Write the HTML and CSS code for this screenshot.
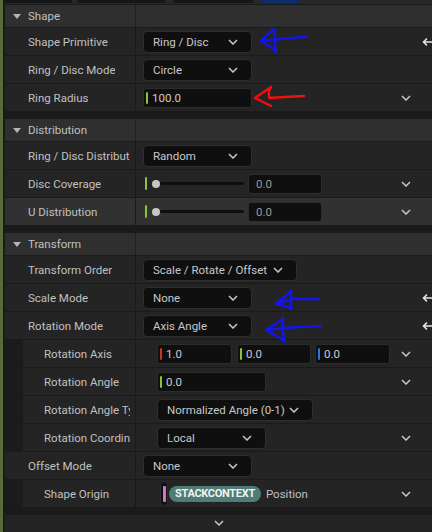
FILE: index.html
```html
<!DOCTYPE html>
<html>
<head>
<meta charset="utf-8">
<title>Details</title>
<link rel="stylesheet" href="styles.css">
</head>
<body>
<div class="app">
  <div class="topbar"><span class="tb tb1"></span><span class="tb tb2"></span><span class="tb tb3"></span><span class="tb tb4"></span></div>

  <section class="section first">
    <div class="header"><div class="hlabel"><span class="tri"></span>Shape</div><div class="hval"></div></div>
    <div class="row">
      <div class="label"><span class="lt">Shape Primitive</span></div>
      <div class="value">
        <div class="content"><div class="combo w109"><span>Ring / Disc</span><svg class="chev" width="10" height="6" viewBox="0 0 10 6"><polyline points="1,1 5,5 9,1"/></svg></div></div>
        <div class="exp"></div>
        <div class="reset"><svg width="14" height="10" viewBox="0 0 14 10"><path d="M5 1.5 L1.5 5 L5 8.5 M1.5 5 H11 V8"/></svg></div>
      </div>
    </div>
    <div class="row">
      <div class="label"><span class="lt">Ring / Disc Mode</span></div>
      <div class="value">
        <div class="content"><div class="combo w109"><span>Circle</span><svg class="chev" width="10" height="6" viewBox="0 0 10 6"><polyline points="1,1 5,5 9,1"/></svg></div></div>
        <div class="exp"></div><div class="reset"></div>
      </div>
    </div>
    <div class="row">
      <div class="label"><span class="lt">Ring Radius</span></div>
      <div class="value">
        <div class="content"><div class="num w109"><span class="bar green"></span><span>100.0</span></div></div>
        <div class="exp"><svg class="chev" width="10" height="6" viewBox="0 0 10 6"><polyline points="1,1 5,5 9,1"/></svg></div><div class="reset"></div>
      </div>
    </div>
  </section>

  <section class="section">
    <div class="header"><div class="hlabel"><span class="tri"></span>Distribution</div><div class="hval"></div></div>
    <div class="row">
      <div class="label"><span class="lt">Ring / Disc Distribution</span></div>
      <div class="value">
        <div class="content"><div class="combo w109"><span>Random</span><svg class="chev" width="10" height="6" viewBox="0 0 10 6"><polyline points="1,1 5,5 9,1"/></svg></div></div>
        <div class="exp"></div><div class="reset"></div>
      </div>
    </div>
    <div class="row">
      <div class="label"><span class="lt">Disc Coverage</span></div>
      <div class="value">
        <div class="content">
          <div class="slider"><span class="sbar"></span><span class="knob"></span><span class="track"></span></div>
          <div class="num w74 dim"><span>0.0</span></div>
        </div>
        <div class="exp"><svg class="chev" width="10" height="6" viewBox="0 0 10 6"><polyline points="1,1 5,5 9,1"/></svg></div><div class="reset"></div>
      </div>
    </div>
    <div class="row hover">
      <div class="label"><span class="lt">U Distribution</span></div>
      <div class="value">
        <div class="content">
          <div class="slider"><span class="sbar"></span><span class="knob"></span><span class="track"></span></div>
          <div class="num w74 dim"><span>0.0</span></div>
        </div>
        <div class="exp"><svg class="chev" width="10" height="6" viewBox="0 0 10 6"><polyline points="1,1 5,5 9,1"/></svg></div><div class="reset"></div>
      </div>
    </div>
  </section>

  <section class="section">
    <div class="header"><div class="hlabel"><span class="tri"></span>Transform</div><div class="hval"></div></div>
    <div class="row">
      <div class="label"><span class="lt">Transform Order</span></div>
      <div class="value">
        <div class="content"><div class="combo w154"><span>Scale / Rotate / Offset</span><svg class="chev" width="10" height="6" viewBox="0 0 10 6"><polyline points="1,1 5,5 9,1"/></svg></div></div>
        <div class="exp"></div><div class="reset"></div>
      </div>
    </div>
    <div class="row">
      <div class="label"><span class="lt">Scale Mode</span></div>
      <div class="value">
        <div class="content"><div class="combo w109"><span>None</span><svg class="chev" width="10" height="6" viewBox="0 0 10 6"><polyline points="1,1 5,5 9,1"/></svg></div></div>
        <div class="exp"></div>
        <div class="reset"><svg width="14" height="10" viewBox="0 0 14 10"><path d="M5 1.5 L1.5 5 L5 8.5 M1.5 5 H11 V8"/></svg></div>
      </div>
    </div>
    <div class="row">
      <div class="label"><span class="lt">Rotation Mode</span></div>
      <div class="value">
        <div class="content"><div class="combo w109"><span>Axis Angle</span><svg class="chev" width="10" height="6" viewBox="0 0 10 6"><polyline points="1,1 5,5 9,1"/></svg></div></div>
        <div class="exp"></div>
        <div class="reset"><svg width="14" height="10" viewBox="0 0 14 10"><path d="M5 1.5 L1.5 5 L5 8.5 M1.5 5 H11 V8"/></svg></div>
      </div>
    </div>
    <div class="row nested">
      <div class="label"><span class="lt">Rotation Axis</span></div>
      <div class="value">
        <div class="content axis">
          <div class="num w75"><span class="bar red"></span><span>1.0</span></div>
          <div class="num w74"><span class="bar green"></span><span>0.0</span></div>
          <div class="num w75"><span class="bar blue"></span><span>0.0</span></div>
        </div>
        <div class="exp"><svg class="chev" width="10" height="6" viewBox="0 0 10 6"><polyline points="1,1 5,5 9,1"/></svg></div><div class="reset"></div>
      </div>
    </div>
    <div class="row nested">
      <div class="label"><span class="lt">Rotation Angle</span></div>
      <div class="value">
        <div class="content"><div class="num w109"><span class="bar green"></span><span>0.0</span></div></div>
        <div class="exp"><svg class="chev" width="10" height="6" viewBox="0 0 10 6"><polyline points="1,1 5,5 9,1"/></svg></div><div class="reset"></div>
      </div>
    </div>
    <div class="row nested">
      <div class="label"><span class="lt">Rotation Angle Type</span></div>
      <div class="value">
        <div class="content"><div class="combo w156"><span>Normalized Angle (0-1)</span><svg class="chev" width="10" height="6" viewBox="0 0 10 6"><polyline points="1,1 5,5 9,1"/></svg></div></div>
        <div class="exp"></div><div class="reset"></div>
      </div>
    </div>
    <div class="row nested">
      <div class="label"><span class="lt">Rotation Coordinate Space</span></div>
      <div class="value">
        <div class="content"><div class="combo w109"><span>Local</span><svg class="chev" width="10" height="6" viewBox="0 0 10 6"><polyline points="1,1 5,5 9,1"/></svg></div></div>
        <div class="exp"><svg class="chev" width="10" height="6" viewBox="0 0 10 6"><polyline points="1,1 5,5 9,1"/></svg></div><div class="reset"></div>
      </div>
    </div>
    <div class="row">
      <div class="label"><span class="lt">Offset Mode</span></div>
      <div class="value">
        <div class="content"><div class="combo w109"><span>None</span><svg class="chev" width="10" height="6" viewBox="0 0 10 6"><polyline points="1,1 5,5 9,1"/></svg></div></div>
        <div class="exp"></div><div class="reset"></div>
      </div>
    </div>
    <div class="row nested">
      <div class="label"><span class="lt">Shape Origin</span></div>
      <div class="value">
        <div class="content">
          <div class="pin"><span class="pbar"></span></div>
          <span class="pill">STACKCONTEXT</span>
          <span class="ptext">Position</span>
        </div>
        <div class="exp"><svg class="chev" width="10" height="6" viewBox="0 0 10 6"><polyline points="1,1 5,5 9,1"/></svg></div><div class="reset"></div>
      </div>
    </div>
  </section>

  <div class="footer"><svg class="chev" width="10" height="6" viewBox="0 0 10 6"><polyline points="1,1 5,5 9,1"/></svg></div>
</div>

<svg class="annot" width="432" height="532" viewBox="0 0 432 532">
  <g class="ablue">
    <path d="M306 37 Q285 38 261 41 M274 29 L261 41 L277 51 M274 29 Q276 40 275 52"/>
    <path d="M319 299 L291 299 L276 304 M291 291 L276 304 L292 308 M291 290 L291 309"/>
    <path d="M321 326 Q300 327 283 328 L266 330 M283 319 L266 330 L285 341 M283 318 Q282 330 284 342"/>
  </g>
  <g class="ared">
    <path d="M304 96 L284 97 L269 98 M271 87 L255 98 L271 106 M271 87 Q267 93 270 98"/>
  </g>
</svg>
</body>
</html>
```

FILE: styles.css
```css
* { box-sizing: border-box; }
html, body { margin: 0; padding: 0; }
body {
  width: 432px;
  height: 532px;
  overflow: hidden;
  background: #1a1a1a;
  font-family: Roboto, "Liberation Sans", sans-serif;
  font-size: 11.5px;
  color: #c0c0c0;
  position: relative;
}
.app {
  min-height: 532px;
  border-left: 3px solid #5a6a3b;
  padding-left: 2px;
  background: #1a1a1a;
}
.topbar {
  height: 4px;
  background: #272727;
  display: flex;
}
.tb { height: 3px; background: #161616; }
.tb1 { width: 67px; }
.tb2 { width: 87px; margin-left: 6px; }
.tb3 { width: 80px; margin-left: 8px; }
.tb4 { width: 38px; margin-left: 9px; background: #0c2c6a; }

.section { margin-top: 8px; }
.section.first { margin-top: 1px; }

.header {
  height: 22px;
  display: grid;
  grid-template-columns: 131px 1fr;
  background: #2f2f2f;
}
.hlabel {
  display: flex;
  align-items: center;
  padding-left: 8px;
  border-right: 1px solid #1f1f1f;
  color: #c0c0c0;
}
.tri {
  width: 0; height: 0;
  border-left: 4px solid transparent;
  border-right: 4px solid transparent;
  border-top: 5px solid #b4b4b4;
  margin-right: 7px;
}

.row {
  height: 28px;
  border-top: 1px solid #1a1a1a;
  display: grid;
  grid-template-columns: 131px 1fr;
  background: #242424;
}
.row.hover { background: #313131; }
.label {
  display: flex;
  align-items: center;
  padding-left: 23px;
  padding-right: 5px;
  border-right: 1px solid #1a1a1a;
  white-space: nowrap;
  overflow: hidden;
  min-width: 0;
}
.lt {
  display: block;
  overflow: hidden;
  white-space: nowrap;
  max-width: 100%;
}
.nested .label {
  padding-left: 39px;
  background: linear-gradient(90deg, #1b1b1b 0, #1b1b1b 18px, transparent 18px);
}
.value {
  display: flex;
  align-items: center;
  padding-left: 7px;
}
.nested .value { padding-left: 21px; }
.content {
  flex: 1;
  display: flex;
  align-items: center;
  min-width: 0;
}
.exp {
  width: 20px;
  display: flex;
  justify-content: center;
  align-items: center;
}
.reset {
  width: 16px;
  padding-left: 6px;
  display: flex;
  align-items: center;
  overflow: hidden;
}
.reset svg { flex: none; }
.reset path { fill: none; stroke: #e6e6e6; stroke-width: 1.6; }

.chev { flex: none; }
.chev polyline { fill: none; stroke: #c8c8c8; stroke-width: 1.5; }

.combo {
  height: 22px;
  background: #0f0f0f;
  border: 1px solid #2e2e2e;
  border-radius: 4px;
  display: flex;
  align-items: center;
  justify-content: space-between;
  padding: 0 13px 0 9px;
  white-space: nowrap;
  color: #c8c8c8;
}
.w109 { width: 109px; }
.w154 { width: 154px; padding-right: 13px; }
.w156 { width: 156px; padding-right: 13px; }
.w74 { width: 74px; }
.w75 { width: 75px; }

.num {
  height: 20px;
  background: #0f0f0f;
  border: 1px solid #2c2c2c;
  border-radius: 3px;
  display: flex;
  align-items: center;
  padding-left: 2px;
  color: #cccccc;
}
.num .bar { margin-right: 4px; }
.num.dim { padding-left: 7px; color: #9a9a9a; }
.bar { width: 2px; height: 12px; border-radius: 1px; }
.green { background: #86c43a; }
.red { background: #c9361f; }
.blue { background: #2f74db; }

.axis .num + .num { margin-left: 4px; }
.axis .num:nth-child(2) { margin-left: 5px; }

.slider {
  display: flex;
  align-items: center;
  width: 101px;
  padding-left: 2px;
}
.sbar { width: 2px; height: 13px; background: #86c43a; border-radius: 1px; }
.knob {
  width: 8px; height: 8px;
  border-radius: 50%;
  background: #c6c6c6;
  margin-left: 5px;
}
.track {
  flex: 1;
  height: 3px;
  background: #0e0e0e;
  border-radius: 2px;
}
.slider + .num { margin-left: 4px; }

.pin {
  width: 8px; height: 25px;
  margin-left: 3px;
  background: #111111;
  border: 1px solid #2c2c2c;
  border-radius: 4px;
  display: flex;
  align-items: center;
  justify-content: center;
}
.pbar { width: 3px; height: 16px; background: #d271d6; border-radius: 1px; }
.pill {
  margin-left: 1px;
  height: 16px;
  padding: 0 6px;
  border-radius: 8px;
  background: #4e7d75;
  color: #f2f2f2;
  font-weight: 700;
  font-size: 11px;
  letter-spacing: -0.3px;
  display: flex;
  align-items: center;
}
.ptext { margin-left: 5px; color: #c0c0c0; }

.footer {
  margin-top: 8px;
  height: 17px;
  background: #242424;
  display: flex;
  justify-content: center;
  align-items: flex-start;
  padding-top: 5px;
}

.annot {
  position: absolute;
  left: 0; top: 0;
  pointer-events: none;
}
.annot path { fill: none; stroke-width: 2.4; stroke-linecap: round; stroke-linejoin: round; }
.annot .ablue path { stroke: #1414f0; }
.annot .ared path { stroke: #f01010; }
```
